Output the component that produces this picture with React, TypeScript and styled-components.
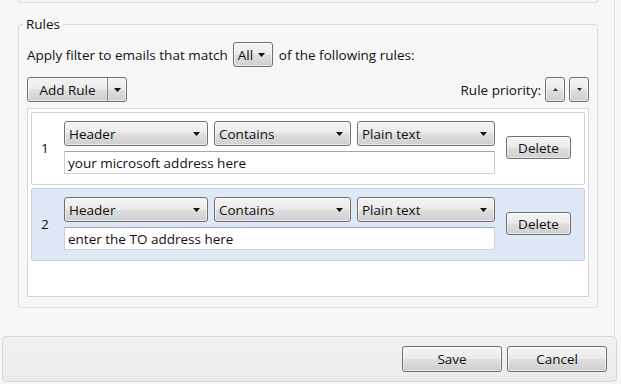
import React from "react";
import styled, { createGlobalStyle, css } from "styled-components";

const Global = createGlobalStyle`
  html, body {
    margin: 0;
    padding: 0;
    width: 621px;
    height: 384px;
    overflow: hidden;
    background: #f7f7f7;
  }
  body {
    font-family: "Open Sans", "Segoe UI", sans-serif;
    font-size: 13.5px;
    color: #111;
  }
`;

const aero = css`
  border: 1px solid #707070;
  border-radius: 3px;
  background: linear-gradient(#f4f4f4 0%, #ebebeb 48%, #dedede 52%, #cfcfcf 100%);
  box-shadow: inset 0 0 0 1px rgba(255, 255, 255, 0.55);
  box-sizing: border-box;
  font: inherit;
  color: #111;
`;

const Window = styled.div`
  display: flex;
  flex-direction: column;
  height: 384px;
`;

const Content = styled.div`
  width: 615px;
  height: 336px;
  box-sizing: border-box;
  padding: 0 16px 0 18px;
  border-right: 1px solid #dedede;
`;

const TopEdge = styled.div`
  height: 3px;
  box-sizing: border-box;
  border: 1px solid #d5dee6;
  border-top: none;
  border-radius: 0 0 3px 3px;
`;

const GroupBox = styled.fieldset`
  margin: 12px 0 0;
  width: 580px;
  box-sizing: border-box;
  border: 1px solid #d5dee6;
  border-radius: 3px;
  padding: 9px 8px 10px;
  min-inline-size: 0;
`;

const Legend = styled.legend`
  margin-left: -4px;
  padding: 0 3px;
  line-height: 18px;
`;

const FilterLine = styled.div`
  display: flex;
  align-items: center;
  gap: 5px;
  height: 25px;
  line-height: 18px;
`;

const Tail = styled.span`
  margin-left: 1px;
`;

const ComboBox = styled.div<{ $w: number }>`
  ${aero}
  width: ${(p) => p.$w}px;
  height: 25px;
  display: flex;
  align-items: center;
  justify-content: space-between;
  padding: 0 7px 0 4px;
  line-height: 18px;
`;

const ToolRow = styled.div`
  display: flex;
  align-items: center;
  justify-content: space-between;
  height: 25px;
  margin-top: 10px;
`;

const SplitButton = styled.div`
  ${aero}
  display: flex;
  width: 100px;
  height: 25px;
`;

const SplitMain = styled.div`
  width: 79px;
  display: flex;
  align-items: center;
  justify-content: center;
  border-right: 1px solid #8a8a8a;
`;

const SplitArrow = styled.div`
  flex: 1;
  display: flex;
  align-items: center;
  justify-content: center;
`;

const Priority = styled.div`
  display: flex;
  align-items: center;
  gap: 4px;
`;

const SmallButton = styled.div`
  ${aero}
  width: 20px;
  height: 25px;
  display: flex;
  align-items: center;
  justify-content: center;
`;

const RuleList = styled.div`
  margin-top: 6px;
  height: 189px;
  box-sizing: border-box;
  border: 1px solid #d6d6d6;
  background: #fff;
  padding: 3px;
  padding-top: 3px;
  display: flex;
  flex-direction: column;
  gap: 3px;
`;

const RuleRow = styled.div<{ $selected?: boolean }>`
  display: flex;
  align-items: center;
  padding: 8px 0 10px 9px;
  border: 1px solid ${(p) => (p.$selected ? "#c3d1e4" : "#d4d4d4")};
  border-radius: 2px;
  background: ${(p) => (p.$selected ? "#dfe8f6" : "#fff")};
`;

const Index = styled.div`
  width: 23px;
  line-height: 18px;
`;

const Fields = styled.div`
  display: flex;
  flex-direction: column;
  gap: 5px;
  width: 431px;
`;

const Selectors = styled.div`
  display: flex;
  justify-content: space-between;
`;

const TextBox = styled.div`
  height: 23px;
  box-sizing: border-box;
  border: 1px solid #abadb3;
  border-color: #a3a5ab #c9ccd2 #d3d6dc #c9ccd2;
  background: #fff;
  padding: 1px 3px 0;
  line-height: 21px;
`;

const Button = styled.div<{ $w: number; $h: number }>`
  ${aero}
  width: ${(p) => p.$w}px;
  height: ${(p) => p.$h}px;
  display: flex;
  align-items: center;
  justify-content: center;
  line-height: 18px;
`;

const DeleteButton = styled(Button)`
  margin-left: 11px;
`;

const Footer = styled.div`
  margin: 0 4px 2px 2px;
  height: 46px;
  box-sizing: border-box;
  border: 1px solid #d6d6d6;
  border-radius: 4px;
  background: linear-gradient(#f0f0f0, #ebebeb);
  display: flex;
  align-items: center;
  justify-content: flex-end;
  gap: 5px;
  padding: 0 9px 1px 0;
`;

const Down = ({ w = 7, color = "#111" }: { w?: number; color?: string }) => (
  <svg width={w} height={Math.ceil(w / 2)} viewBox={`0 0 ${w} ${Math.ceil(w / 2)}`}>
    <path d={`M0 0H${w}L${w / 2} ${Math.ceil(w / 2)}Z`} fill={color} />
  </svg>
);

const Up = ({ w = 5, color = "#333" }: { w?: number; color?: string }) => (
  <svg width={w} height={Math.ceil(w / 2)} viewBox={`0 0 ${w} ${Math.ceil(w / 2)}`}>
    <path d={`M0 ${Math.ceil(w / 2)}H${w}L${w / 2} 0Z`} fill={color} />
  </svg>
);

const rules = [
  { n: 1, value: "your microsoft address here" },
  { n: 2, value: "enter the TO address here", selected: true },
];

export default function App() {
  return (
    <Window>
      <Global />
      <Content>
        <TopEdge />
        <GroupBox>
          <Legend>Rules</Legend>
          <FilterLine>
            <span>Apply filter to emails that match</span>
            <ComboBox $w={40}>
              All
              <Down />
            </ComboBox>
            <Tail>of the following rules:</Tail>
          </FilterLine>
          <ToolRow>
            <SplitButton>
              <SplitMain>Add Rule</SplitMain>
              <SplitArrow>
                <Down />
              </SplitArrow>
            </SplitButton>
            <Priority>
              <span>Rule priority:</span>
              <SmallButton>
                <Up />
              </SmallButton>
              <SmallButton>
                <Down w={5} color="#333" />
              </SmallButton>
            </Priority>
          </ToolRow>
          <RuleList>
            {rules.map((r) => (
              <RuleRow key={r.n} $selected={r.selected}>
                <Index>{r.n}</Index>
                <Fields>
                  <Selectors>
                    <ComboBox $w={144}>
                      Header
                      <Down />
                    </ComboBox>
                    <ComboBox $w={137}>
                      Contains
                      <Down />
                    </ComboBox>
                    <ComboBox $w={138}>
                      Plain text
                      <Down />
                    </ComboBox>
                  </Selectors>
                  <TextBox>{r.value}</TextBox>
                </Fields>
                <DeleteButton $w={65} $h={23}>
                  Delete
                </DeleteButton>
              </RuleRow>
            ))}
          </RuleList>
        </GroupBox>
      </Content>
      <Footer>
        <Button $w={100} $h={26}>
          Save
        </Button>
        <Button $w={100} $h={26}>
          Cancel
        </Button>
      </Footer>
    </Window>
  );
}
